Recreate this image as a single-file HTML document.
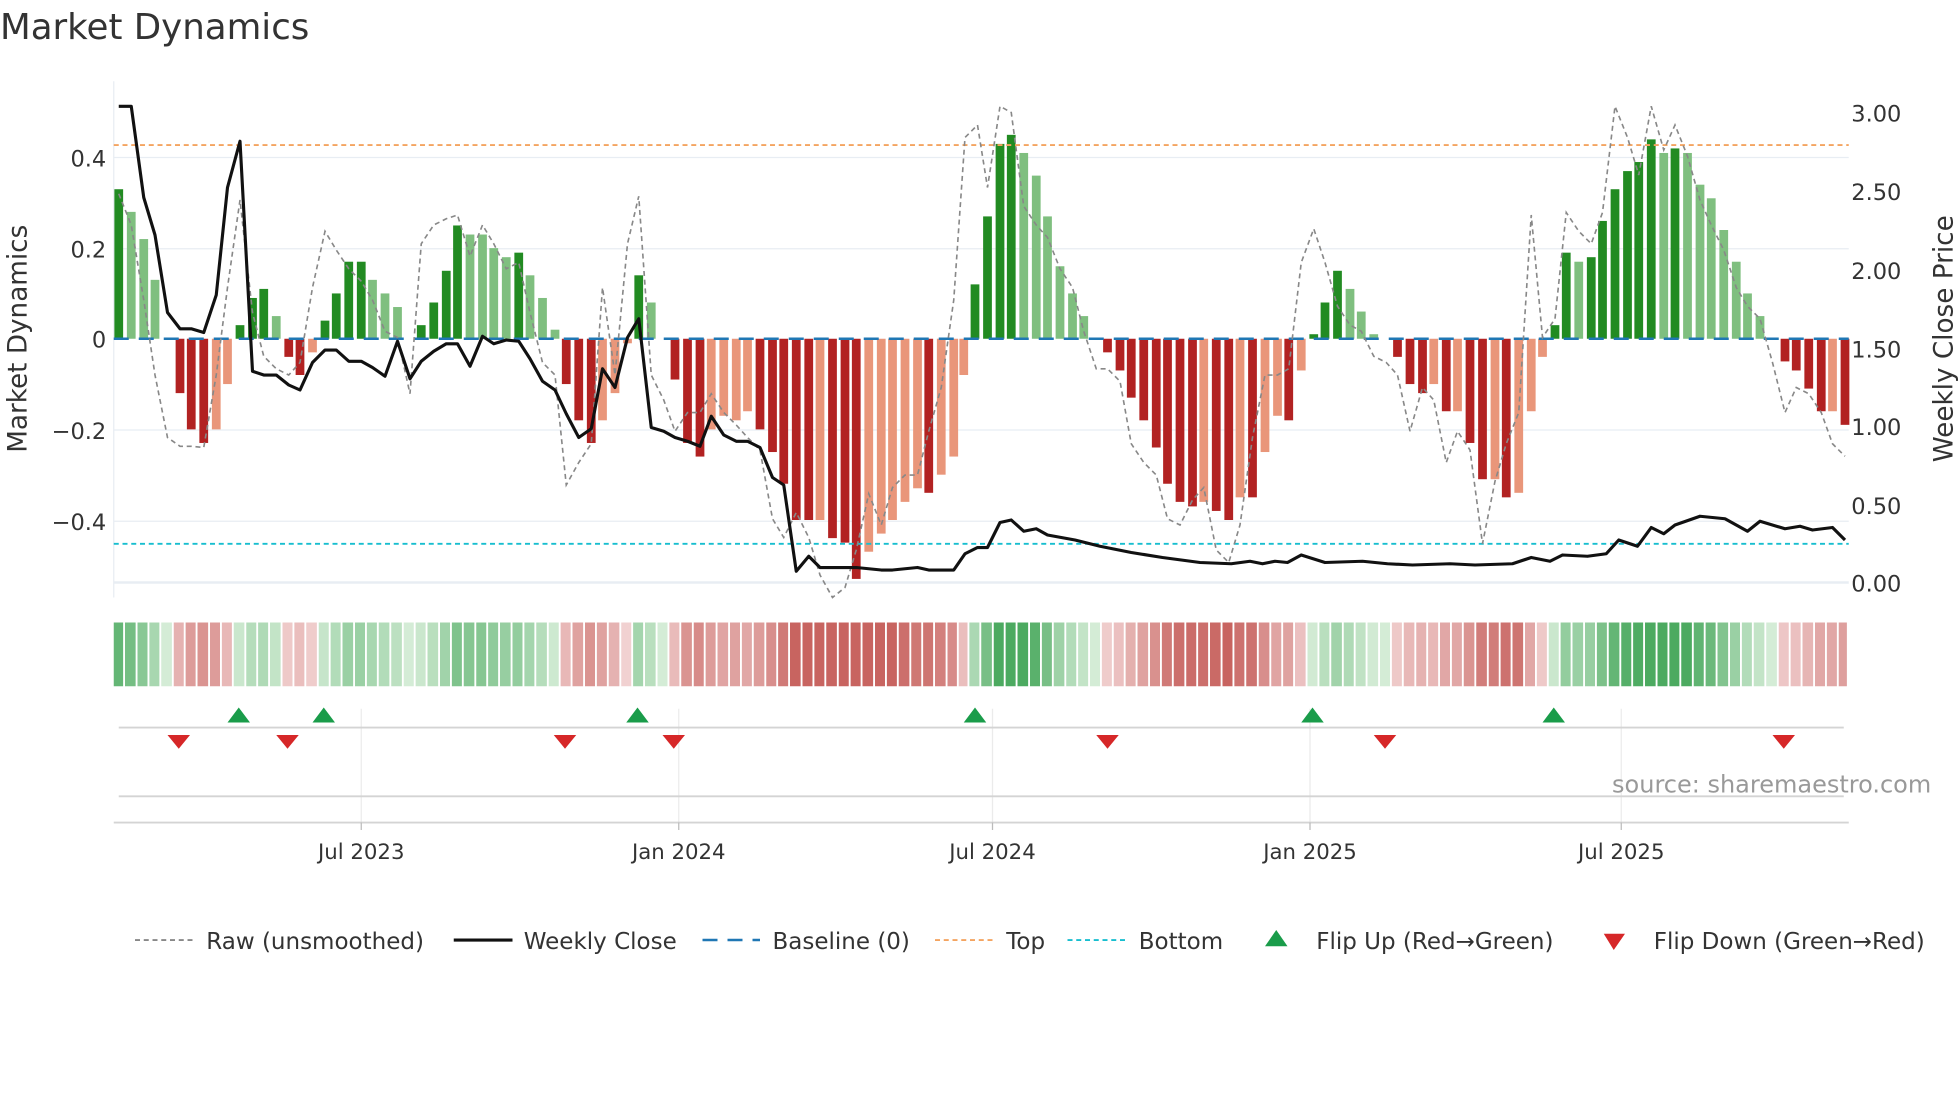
<!DOCTYPE html>
<html><head><meta charset="utf-8"><style>
html,body{margin:0;padding:0;background:#fff;overflow:hidden}
#w{width:1568px;height:882px;transform:scale(1.25);transform-origin:0 0;position:absolute;left:0;top:0}
svg text{font-family:"DejaVu Sans","Liberation Sans",sans-serif}
</style></head><body><div id="w">
<svg id="s" width="1568" height="882" viewBox="0 0 1568 882" xmlns="http://www.w3.org/2000/svg">
<text x="0" y="31" font-size="28.5" fill="#333">Market Dynamics</text>
<g stroke="#e8edf3" stroke-width="1">
<line x1="91" x2="1479" y1="126" y2="126"/><line x1="91" x2="1479" y1="199" y2="199"/>
<line x1="91" x2="1479" y1="344" y2="344"/><line x1="91" x2="1479" y1="417" y2="417"/>
<line x1="91" x2="1479" y1="466" y2="466" stroke-width="2"/>
<line x1="91" x2="91" y1="65" y2="478"/>
</g>
<g id="bars"></g>
<line x1="91" x2="1479" y1="271" y2="271" stroke="#1f77b4" stroke-width="2" stroke-dasharray="12,8"/>
<line x1="91" x2="1479" y1="116" y2="116" stroke="#f4a460" stroke-width="1.5" stroke-dasharray="4,3"/>
<line x1="91" x2="1479" y1="435" y2="435" stroke="#17becf" stroke-width="1.5" stroke-dasharray="4,3"/>
<polyline id="raw" fill="none" stroke="#888" stroke-width="1.3" stroke-dasharray="4,3"/>
<polyline id="px" fill="none" stroke="#111" stroke-width="2.5" stroke-linejoin="round"/>
<g font-size="18" fill="#333" text-anchor="end">
<text x="85" y="133">0.4</text><text x="85" y="206">0.2</text><text x="85" y="278">0</text>
<text x="85" y="351">−0.2</text><text x="85" y="424">−0.4</text></g>
<g font-size="18" fill="#333">
<text x="1481" y="97">3.00</text><text x="1481" y="160">2.50</text><text x="1481" y="223">2.00</text>
<text x="1481" y="286">1.50</text><text x="1481" y="348">1.00</text><text x="1481" y="411">0.50</text><text x="1481" y="473">0.00</text></g>
<text transform="translate(21,271) rotate(-90)" font-size="21" fill="#333" text-anchor="middle">Market Dynamics</text>
<text transform="translate(1562,271) rotate(-90)" font-size="21" fill="#333" text-anchor="middle">Weekly Close Price</text>
<g id="heat"></g>
<g stroke="#ebebeb" stroke-width="1">
<line x1="289" x2="289" y1="567" y2="658"/><line x1="543" x2="543" y1="567" y2="658"/>
<line x1="794" x2="794" y1="567" y2="658"/><line x1="1048" x2="1048" y1="567" y2="658"/>
<line x1="1297" x2="1297" y1="567" y2="658"/></g>
<line x1="95" x2="1475" y1="582" y2="582" stroke="#d4d4d4" stroke-width="1.5"/>
<line x1="95" x2="1475" y1="637" y2="637" stroke="#d4d4d4" stroke-width="1.5"/>
<line x1="91" x2="1479" y1="658" y2="658" stroke="#d4d4d4" stroke-width="1.5"/>
<g stroke="#bbb"><line x1="289" x2="289" y1="658" y2="664"/><line x1="543" x2="543" y1="658" y2="664"/><line x1="794" x2="794" y1="658" y2="664"/><line x1="1048" x2="1048" y1="658" y2="664"/><line x1="1297" x2="1297" y1="658" y2="664"/></g>
<g id="mk"></g>
<text x="1545" y="634" font-size="19.2" fill="#999" text-anchor="end">source: sharemaestro.com</text>
<g font-size="17" fill="#333" text-anchor="middle">
<text x="289" y="687">Jul 2023</text><text x="543" y="687">Jan 2024</text><text x="794" y="687">Jul 2024</text>
<text x="1048" y="687">Jan 2025</text><text x="1297" y="687">Jul 2025</text></g>
<g font-size="18.4" fill="#333">
<line x1="108" x2="154" y1="752" y2="752" stroke="#888" stroke-width="1.5" stroke-dasharray="4,3"/>
<text x="165" y="759">Raw (unsmoothed)</text>
<line x1="363" x2="410" y1="752" y2="752" stroke="#111" stroke-width="2.5"/>
<text x="419" y="759">Weekly Close</text>
<line x1="562" x2="608" y1="752" y2="752" stroke="#1f77b4" stroke-width="2" stroke-dasharray="12,8"/>
<text x="618" y="759">Baseline (0)</text>
<line x1="748" x2="794" y1="752" y2="752" stroke="#f4a460" stroke-width="1.5" stroke-dasharray="4,3"/>
<text x="805" y="759">Top</text>
<line x1="854" x2="900" y1="752" y2="752" stroke="#17becf" stroke-width="1.5" stroke-dasharray="4,3"/>
<text x="911" y="759">Bottom</text>
<polygon points="1012,757 1021,744 1030,757" fill="#1a9c4a"/>
<text x="1053" y="759">Flip Up (Red→Green)</text>
<polygon points="1283,747 1300,747 1291,760" fill="#d62728"/>
<text x="1323" y="759">Flip Down (Green→Red)</text>
</g>
</svg></div>
<script>
var NS="http://www.w3.org/2000/svg";
function el(p,t,a){var e=document.createElementNS(NS,t);for(var k in a)e.setAttribute(k,a[k]);p.appendChild(e);return e;}
var B=[[95,.33,1],[105,.28,0],[115,.22,0],[124,.13,0],[134,0,0],[144,-.12,1],[153,-.2,1],[163,-.23,1],[173,-.2,0],[182,-.1,0],[192,.03,1],[202,.09,1],[211,.11,1],[221,.05,0],[231,-.04,1],[240,-.08,1],[250,-.03,0],[260,.04,1],[269,.1,1],[279,.17,1],[289,.17,1],[298,.13,0],[308,.1,0],[318,.07,0],[328,0,0],[337,.03,1],[347,.08,1],[357,.15,1],[366,.25,1],[376,.23,0],[386,.23,0],[395,.2,0],[405,.18,0],[415,.19,1],[424,.14,0],[434,.09,0],[444,.02,0],[453,-.1,1],[463,-.18,1],[473,-.23,1],[482,-.18,0],[492,-.12,0],[502,-.01,0],[511,.14,1],[521,.08,0],[531,0,0],[540,-.09,1],[550,-.23,1],[560,-.26,1],[569,-.2,0],[579,-.17,0],[589,-.18,0],[598,-.16,0],[608,-.2,1],[618,-.25,1],[627,-.32,1],[637,-.4,1],[647,-.4,1],[656,-.4,0],[666,-.44,1],[676,-.45,1],[685,-.53,1],[695,-.47,0],[705,-.43,0],[714,-.4,0],[724,-.36,0],[734,-.33,0],[743,-.34,1],[753,-.3,0],[763,-.26,0],[771,-.08,0],[780,.12,1],[790,.27,1],[800,.43,1],[809,.45,1],[819,.41,0],[829,.36,0],[838,.27,0],[848,.16,0],[858,.1,0],[867,.05,0],[877,0,0],[886,-.03,1],[896,-.07,1],[905,-.13,1],[915,-.18,1],[925,-.24,1],[934,-.32,1],[944,-.36,1],[954,-.37,1],[963,-.36,0],[973,-.38,1],[983,-.4,1],[992,-.35,0],[1002,-.35,1],[1012,-.25,0],[1022,-.17,0],[1031,-.18,1],[1041,-.07,0],[1051,.01,1],[1060,.08,1],[1070,.15,1],[1080,.11,0],[1089,.06,0],[1099,.01,0],[1109,0,0],[1118,-.04,1],[1128,-.1,1],[1138,-.12,1],[1147,-.1,0],[1157,-.16,1],[1166,-.16,0],[1176,-.23,1],[1186,-.31,1],[1196,-.31,0],[1205,-.35,1],[1215,-.34,0],[1225,-.16,0],[1234,-.04,0],[1244,.03,1],[1253,.19,1],[1263,.17,0],[1273,.18,1],[1282,.26,1],[1292,.33,1],[1302,.37,1],[1311,.39,1],[1321,.44,1],[1331,.41,0],[1340,.42,1],[1350,.41,0],[1360,.34,0],[1369,.31,0],[1379,.24,0],[1389,.17,0],[1398,.1,0],[1408,.05,0],[1418,0,0],[1428,-.05,1],[1437,-.07,1],[1447,-.11,1],[1457,-.16,1],[1466,-.16,0],[1476,-.19,1]];
var g=document.getElementById('bars'),h=document.getElementById('heat');
function mix(a,b,t){return 'rgb('+[0,1,2].map(function(i){return Math.round(a[i]+(b[i]-a[i])*t)}).join(',')+')';}
B.forEach(function(b,i){var x=b[0],v=b[1];var y0=271,y1=271-v*362.5;
 var c=v>=0?(b[2]?'#228b22':'#7fbf7f'):(b[2]?'#b22222':'#e9967a');
 if(Math.abs(v)>0.005)el(g,'rect',{x:x-3.5,y:Math.min(y0,y1),width:7,height:Math.abs(y1-y0),fill:c});
 var t=Math.min(1,Math.abs(v)/0.4);
 var col=v>=0?mix([212,236,214],[76,170,96],t):mix([242,212,212],[200,100,96],t);
 var xl=(i==0)?91:(B[i-1][0]+x)/2,xr=(i==B.length-1)?1479:(x+B[i+1][0])/2;
 el(h,'rect',{x:xl,y:498,width:Math.max(1,xr-xl-1.5),height:51,fill:col});
});
document.getElementById('px').setAttribute('points',"95,85 105,85 115,158 124,188 134,250 144,263 153,263 163,266 173,236 182,150 192,113 202,297 211,300 221,300 231,308 240,312 250,290 260,280 269,280 279,289 289,289 298,294 308,301 318,273 328,303 337,289 347,281 357,275 366,275 376,293 386,269 395,275 405,272 415,273 424,287 434,305 444,312 453,331 463,350 473,343 482,295 492,310 502,270 511,255 521,342 531,345 540,350 550,353 560,357 569,333 579,348 589,353 598,353 608,358 618,382 627,388 637,457 647,445 656,454 666,454 676,454 685,454 695,455 705,456 714,456 724,455 734,454 743,456 753,456 763,456 772,443 782,438 790,438 800,418 809,416 819,425 829,423 838,428 860,432 880,437 905,442 930,446 960,450 985,451 1000,449 1010,451 1020,449 1030,450 1041,444 1060,450 1090,449 1110,451 1130,452 1160,451 1180,452 1210,451 1225,446 1240,449 1250,444 1270,445 1285,443 1295,432 1310,437 1321,422 1331,427 1340,420 1360,413 1380,415 1398,425 1408,417 1428,423 1440,421 1450,424 1466,422 1476,432");
document.getElementById('raw').setAttribute('points',"95,155 105,180 115,240 124,300 134,350 144,357 153,357 163,358 173,300 182,230 192,160 202,250 211,285 221,295 231,300 240,290 250,230 260,185 269,200 279,215 289,225 298,240 308,265 318,270 328,315 337,195 347,180 357,175 366,172 376,205 386,180 395,195 405,215 415,210 424,250 434,290 444,300 453,388 463,370 473,355 482,230 492,300 502,195 511,157 521,300 531,320 540,345 550,330 560,330 569,315 579,330 589,340 598,350 608,360 618,415 627,430 637,410 647,430 656,460 666,478 676,470 685,440 695,395 705,420 714,390 724,380 734,380 743,345 753,310 763,240 772,110 782,100 790,150 800,85 809,90 819,165 829,180 838,190 848,215 858,230 867,265 877,295 886,295 896,305 905,355 915,370 925,380 934,415 944,420 954,400 963,390 973,440 983,450 992,420 1002,350 1012,300 1022,300 1031,295 1041,210 1051,183 1060,210 1070,245 1080,260 1089,265 1099,285 1109,290 1118,300 1128,345 1138,310 1147,320 1157,370 1166,345 1176,360 1186,435 1196,385 1205,355 1215,330 1225,172 1234,270 1244,255 1253,170 1263,185 1273,195 1282,170 1292,85 1302,110 1311,140 1321,85 1331,120 1340,100 1350,125 1360,160 1369,180 1379,200 1389,230 1398,245 1408,255 1418,290 1428,330 1437,310 1447,315 1457,330 1466,355 1476,365");
var m=document.getElementById('mk');
[191,259,510,780,1050,1243].forEach(function(x){el(m,'polygon',{points:(x-9)+',578 '+x+',566 '+(x+9)+',578',fill:'#1a9c4a'});});
[143,230,452,539,886,1108,1427].forEach(function(x){el(m,'polygon',{points:(x-9)+',588 '+(x+9)+',588 '+x+',599',fill:'#d62728'});});
</script>
</body></html>
